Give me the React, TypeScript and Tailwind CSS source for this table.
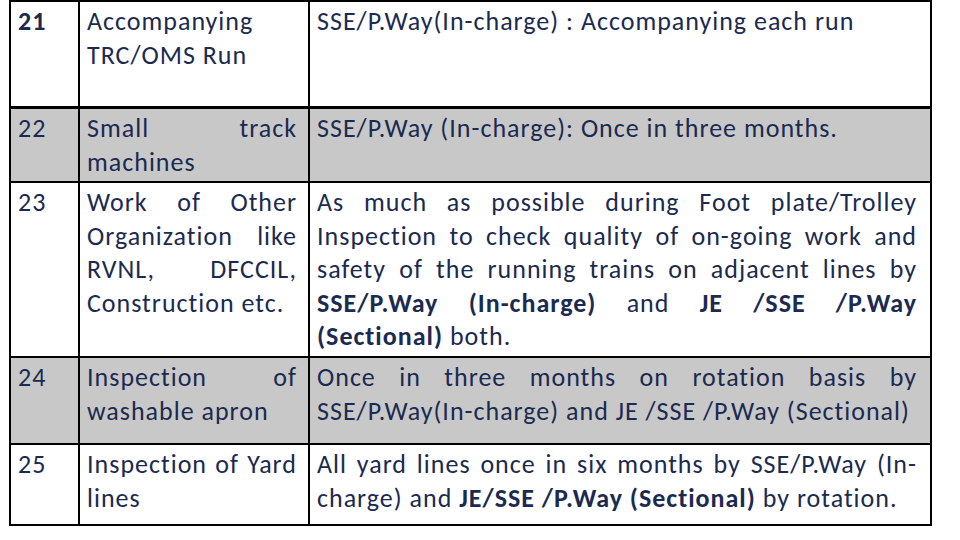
import React from "react";

const J = "text-justify [text-align-last:justify]";

function Cell({ children, className = "" }: { children: React.ReactNode; className?: string }) {
  return <div className={`pt-[3px] pl-[7px] ${className}`}>{children}</div>;
}

function Row({
  num,
  bold = false,
  gray = false,
  h,
  top,
  c2,
  c3,
}: {
  num: string;
  bold?: boolean;
  gray?: boolean;
  h: string;
  top: string;
  c2: React.ReactNode;
  c3: React.ReactNode;
}) {
  return (
    <div className={`flex ${top} border-black ${gray ? "bg-[#c8c8c8]" : "bg-white"}`}>
      <Cell className={`w-[69px] shrink-0 border-r-2 border-black ${h} ${bold ? "font-bold" : ""}`}>{num}</Cell>
      <Cell className={`w-[230px] shrink-0 border-r-2 border-black pr-[11px] ${h}`}>{c2}</Cell>
      <Cell className={`flex-1 pr-[13px] ${h}`}>{c3}</Cell>
    </div>
  );
}

export default function App() {
  return (
    <div className="w-[960px] h-[540px] bg-white pl-[9px]">
      <div
        className="w-[923px] border-2 border-black text-[26px] leading-[33.5px] tracking-[1px] text-[#1b2a50]"
        style={{ fontFamily: '"Carlito", "Liberation Sans", sans-serif' }}
      >
        <Row
          num="21"
          bold
          h="h-[104px]"
          top=""
          c2={
            <>
              <div>Accompanying</div>
              <div>TRC/OMS Run</div>
            </>
          }
          c3={<div>SSE/P.Way(In-charge) : Accompanying each run</div>}
        />
        <Row
          num="22"
          gray
          h="h-[72px]"
          top="border-t-[3px]"
          c2={
            <>
              <div className={J}>Small track</div>
              <div>machines</div>
            </>
          }
          c3={<div>SSE/P.Way (In-charge): Once in three months.</div>}
        />
        <Row
          num="23"
          h="h-[173px]"
          top="border-t-2"
          c2={
            <>
              <div className={J}>Work of Other</div>
              <div className={J}>Organization like</div>
              <div className={J}>RVNL, DFCCIL,</div>
              <div>Construction etc.</div>
            </>
          }
          c3={
            <>
              <div className={J}>As much as possible during Foot plate/Trolley</div>
              <div className={J}>Inspection to check quality of on-going work and</div>
              <div className={J}>safety of the running trains on adjacent lines by</div>
              <div className={J}>
                <b>SSE/P.Way (In-charge)</b> and <b>JE /SSE /P.Way</b>
              </div>
              <div>
                <b>(Sectional)</b> both.
              </div>
            </>
          }
        />
        <Row
          num="24"
          gray
          h="h-[85px]"
          top="border-t-2"
          c2={
            <>
              <div className={J}>Inspection of</div>
              <div>washable apron</div>
            </>
          }
          c3={
            <>
              <div className={J}>Once in three months on rotation basis by</div>
              <div>SSE/P.Way(In-charge) and JE /SSE /P.Way (Sectional)</div>
            </>
          }
        />
        <Row
          num="25"
          h="h-[79px]"
          top="border-t-2"
          c2={
            <>
              <div className={J}>Inspection of Yard</div>
              <div>lines</div>
            </>
          }
          c3={
            <>
              <div className={J}>All yard lines once in six months by SSE/P.Way (In-</div>
              <div>
                charge) and <b>JE/SSE /P.Way (Sectional)</b> by rotation.
              </div>
            </>
          }
        />
      </div>
    </div>
  );
}
